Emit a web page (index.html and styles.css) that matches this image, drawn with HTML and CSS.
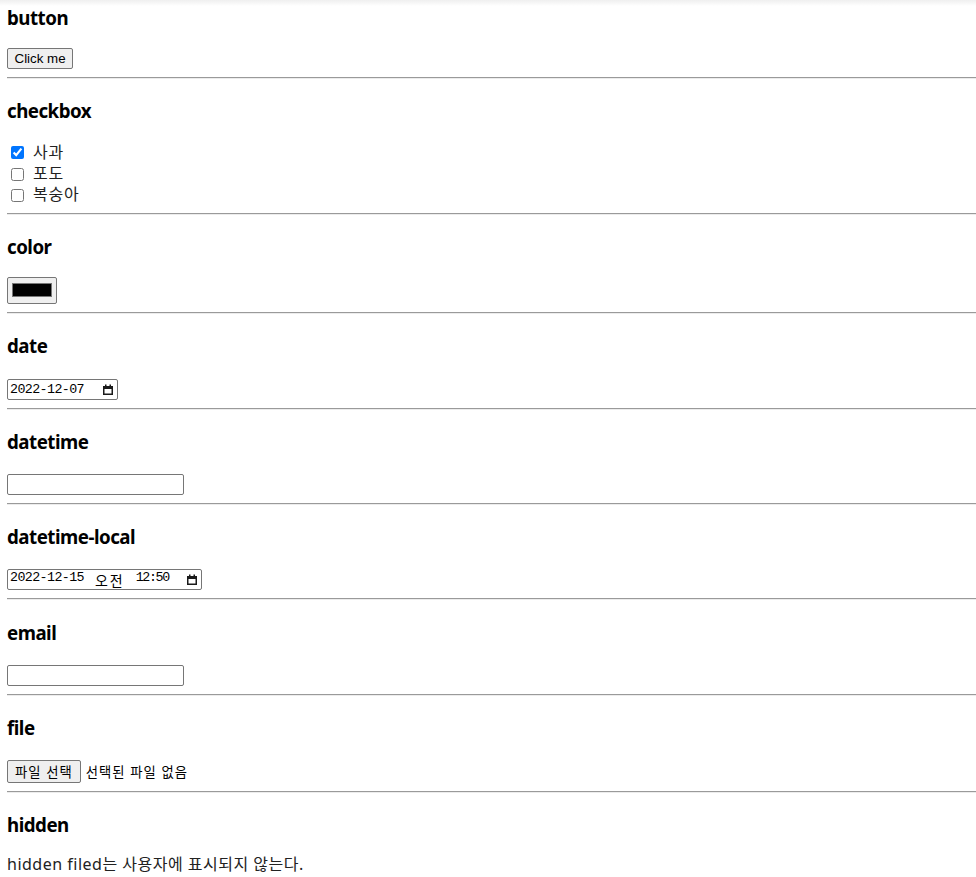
FILE: index.html
```html
<html lang="ko"><head>
    <meta charset="UTF-8">
    <title>input types</title>
    <link rel="stylesheet" href="styles.css">
</head>
<body>
    <main class="page">
        <section class="demo demo-first">
            <h3 class="demo-title">button</h3>
            <div class="field field-button">
                <button class="btn" type="button">Click me</button>
            </div>
        </section>
        <hr>
        <section class="demo">
            <h3 class="demo-title">checkbox</h3>
            <div class="check-list">
                <label class="check"><input type="checkbox" checked=""><span>사과</span></label>
                <label class="check"><input type="checkbox"><span>포도</span></label>
                <label class="check"><input type="checkbox"><span>복숭아</span></label>
            </div>
        </section>
        <hr>
        <section class="demo">
            <h3 class="demo-title">color</h3>
            <div class="field field-color">
                <span class="color-box"><span class="color-swatch"></span></span>
            </div>
        </section>
        <hr>
        <section class="demo">
            <h3 class="demo-title">date</h3>
            <div class="field field-text">
                <span class="fake-input date-input">
                    <span class="date-text">2022-12-07</span>
                    <svg class="cal-icon" width="10" height="11" viewBox="0 0 10 11">
                        <rect x="0.75" y="2.75" width="8.5" height="7.5" fill="none" stroke="#1a1a1a" stroke-width="1.5"/>
                        <rect x="0" y="2" width="10" height="3" fill="#1a1a1a"/>
                        <rect x="2" y="0.5" width="1.5" height="2" fill="#1a1a1a"/>
                        <rect x="6.5" y="0.5" width="1.5" height="2" fill="#1a1a1a"/>
                    </svg>
                </span>
            </div>
        </section>
        <hr>
        <section class="demo">
            <h3 class="demo-title">datetime</h3>
            <div class="field field-text">
                <input class="text-input" type="text">
            </div>
        </section>
        <hr>
        <section class="demo">
            <h3 class="demo-title">datetime-local</h3>
            <div class="field field-text">
                <span class="fake-input datetime-input">
                    <span class="date-text dt-parts">
                        <span>2022-12-15</span>
                        <span class="dt-ko">오전</span>
                        <span class="dt-time">12:50</span>
                    </span>
                    <svg class="cal-icon" width="10" height="11" viewBox="0 0 10 11">
                        <rect x="0.75" y="2.75" width="8.5" height="7.5" fill="none" stroke="#1a1a1a" stroke-width="1.5"/>
                        <rect x="0" y="2" width="10" height="3" fill="#1a1a1a"/>
                        <rect x="2" y="0.5" width="1.5" height="2" fill="#1a1a1a"/>
                        <rect x="6.5" y="0.5" width="1.5" height="2" fill="#1a1a1a"/>
                    </svg>
                </span>
            </div>
        </section>
        <hr>
        <section class="demo">
            <h3 class="demo-title">email</h3>
            <div class="field field-text">
                <input class="text-input" type="email">
            </div>
        </section>
        <hr>
        <section class="demo">
            <h3 class="demo-title">file</h3>
            <div class="field field-file">
                <button class="btn btn-file" type="button">파일 선택</button>
                <span class="file-status">선택된 파일 없음</span>
            </div>
        </section>
        <hr>
        <section class="demo">
            <h3 class="demo-title">hidden</h3>
            <input type="hidden" name="secret" value="">
            <p class="note">hidden filed는 사용자에 표시되지 않는다.</p>
        </section>
    </main>
</body></html>
```

FILE: styles.css
```css
html {
    overflow: hidden;
    background: #fff linear-gradient(to bottom, #efefef, #fff 6px) no-repeat;
}
body {
    margin: 0;
    padding: 0 0 0 7px;
    font-family: 'Noto Sans', 'Noto Sans CJK KR', sans-serif;
    font-size: 16px;
    color: #000;
}
.page {
    display: block;
}
hr {
    margin: 0;
    height: 0;
    border: none;
    border-top: 1px solid #9a9a9a;
    border-bottom: 1px solid #ececec;
}
.demo {
    padding: 18.72px 0 8px;
}
.demo-first {
    padding-top: 4px;
}
.demo-title {
    margin: 0 0 17.22px;
    padding-top: 1.5px;
    font-size: 18.72px;
    line-height: 24px;
    font-weight: 700;
    letter-spacing: -0.5px;
}
.field {
    display: flex;
    align-items: center;
}
.field-button {
    padding-top: 1.5px;
}
.field-color {
    padding-top: 1px;
}
.field-text {
    padding-top: 3px;
}
.field-file {
    padding-top: 2.5px;
}
.btn {
    height: 21px;
    margin: 0;
    padding: 0 6.5px;
    border: 1px solid #767676;
    border-radius: 2px;
    background-color: #efefef;
    color: #000;
    font-family: 'Liberation Sans', Arial, sans-serif;
    font-size: 13.333px;
    line-height: 19px;
}
.btn-file {
    height: 23px;
    padding: 0 7px;
    font-family: 'Noto Sans CJK KR', sans-serif;
    line-height: 21px;
    letter-spacing: 1px;
}
.file-status {
    margin-left: 5px;
    font-family: 'Noto Sans CJK KR', sans-serif;
    font-size: 13.333px;
    letter-spacing: 1px;
    color: #000;
}
.check-list {
    display: flex;
    flex-direction: column;
}
.check {
    display: flex;
    align-items: center;
    height: 21.33px;
    line-height: 21.33px;
    font-family: 'Noto Sans CJK KR', sans-serif;
    color: #222;
}
.check input {
    width: 13px;
    height: 13px;
    margin: 5px 3px 2px 4px;
    accent-color: #0075ff;
}
.check span {
    margin-left: 6px;
    letter-spacing: 0.8px;
}
.color-box {
    display: flex;
    align-items: center;
    justify-content: center;
    box-sizing: border-box;
    width: 50px;
    height: 27px;
    padding-bottom: 1px;
    border: 1px solid #767676;
    border-radius: 2px;
    background-color: #efefef;
}
.color-swatch {
    box-sizing: border-box;
    width: 40px;
    height: 14px;
    border: 1px solid #777;
    background-color: #000;
}
.fake-input {
    display: flex;
    align-items: center;
    justify-content: space-between;
    box-sizing: border-box;
    height: 21px;
    padding: 0 4px 0 2px;
    border: 1px solid #767676;
    border-radius: 2px;
    background-color: #fff;
}
.date-input {
    width: 111px;
}
.datetime-input {
    width: 195px;
}
.date-text {
    font-family: 'Liberation Mono', 'Noto Sans CJK KR', monospace;
    font-size: 13.333px;
    letter-spacing: -0.6px;
    color: #000;
}
.dt-parts {
    display: flex;
    gap: 11px;
}
.dt-ko {
    font-family: 'Noto Sans CJK KR', sans-serif;
    font-size: 14px;
    letter-spacing: 2px;
}
.dt-time {
    letter-spacing: -1.4px;
}
.cal-icon {
    display: block;
}
.text-input {
    box-sizing: border-box;
    width: 177px;
    height: 21px;
    margin: 0;
    padding: 1px 2px;
    border: 1px solid #767676;
    border-radius: 2px;
    font-size: 13.333px;
}
.note {
    margin: 0;
    line-height: 21.33px;
    letter-spacing: 0.5px;
    color: #222;
}
```
